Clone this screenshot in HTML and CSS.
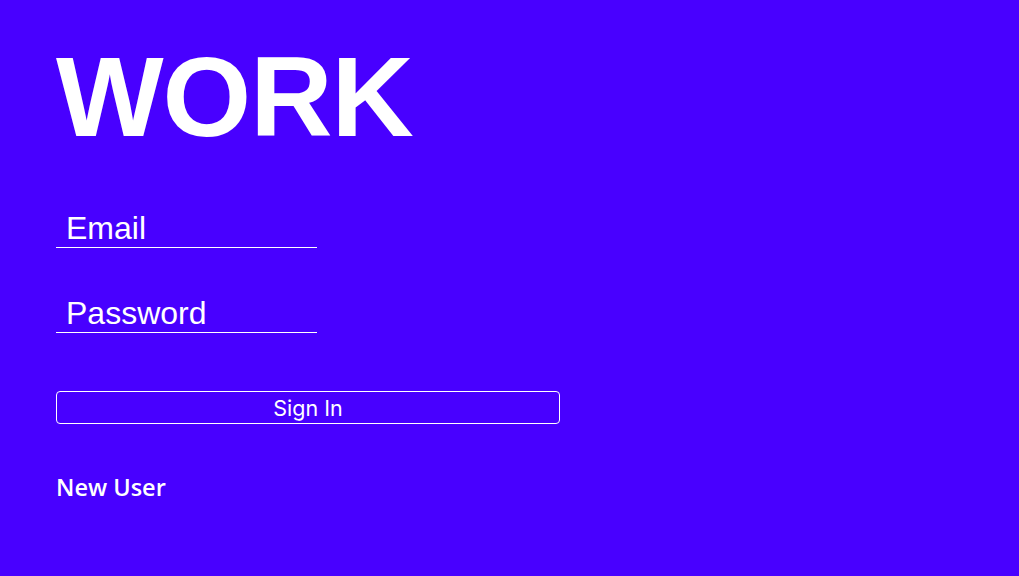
FILE: index.html
```html
<!DOCTYPE html>
<html>
<head>
<meta charset="utf-8">
<link rel="stylesheet" href="styles.css">
</head>
<body>
<main class="page">
  <h1 class="title">WORK</h1>
  <form class="form">
    <div class="field"><span class="field-label">Email</span></div>
    <div class="field field-second"><span class="field-label">Password</span></div>
    <button type="button" class="signin">Sign In</button>
    <a class="new-user">New User</a>
  </form>
</main>
</body>
</html>
```

FILE: styles.css
```css
html, body {
  margin: 0;
  padding: 0;
  background: #4800ff;
  height: 100%;
}
.page {
  padding: 40px 0 0 56px;
  color: #ffffff;
  font-family: "Liberation Sans", Arial, sans-serif;
}
.title {
  margin: 0;
  font-size: 114px;
  line-height: 114px;
  font-weight: 700;
  letter-spacing: -1px;
}
.form {
  display: flex;
  flex-direction: column;
  align-items: flex-start;
  margin-top: 59px;
}
.field {
  box-sizing: border-box;
  width: 261px;
  height: 35px;
  padding-left: 10px;
  border-bottom: 1px solid #ffffff;
}
.field-second {
  margin-top: 50px;
}
.field-label {
  display: block;
  font-size: 32px;
  line-height: 30px;
}
.signin {
  margin-top: 58px;
  width: 504px;
  height: 33px;
  padding: 0;
  background: transparent;
  border: 1px solid #ffffff;
  border-radius: 4px;
  color: #ffffff;
  font-family: Inter, "Liberation Sans", sans-serif;
  font-size: 21.5px;
}
.new-user {
  margin-top: 48px;
  font-family: "Open Sans", "Noto Sans", sans-serif;
  font-weight: 600;
  font-size: 23.5px;
  line-height: 30px;
  color: #ffffff;
}
```
